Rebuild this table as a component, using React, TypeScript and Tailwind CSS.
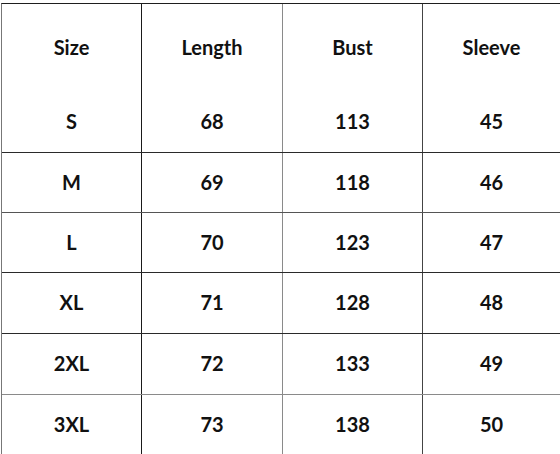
const rows = [
  { size: 'S', length: 68, bust: 113, sleeve: 45, h: 'h-[61px]', line: 'border-[#2a2a2a]' },
  { size: 'M', length: 69, bust: 118, sleeve: 46, h: 'h-[60px]', line: 'border-[#555]' },
  { size: 'L', length: 70, bust: 123, sleeve: 47, h: 'h-[60px]', line: 'border-[#2a2a2a]' },
  { size: 'XL', length: 71, bust: 128, sleeve: 48, h: 'h-[61px]', line: 'border-[#2a2a2a]' },
  { size: '2XL', length: 72, bust: 133, sleeve: 49, h: 'h-[61px]', line: 'border-[#8a8a8a]' },
  { size: '3XL', length: 73, bust: 138, sleeve: 50, h: 'h-[60px]', line: 'border-transparent' },
]

const cols = [
  'w-[140px] border-r border-[#1a1a1a]',
  'w-[141px] border-r border-[#8a8a8a]',
  'w-[140px] border-r border-[#444]',
  'flex-1',
]

function Cell({ className, children }: { className: string; children: React.ReactNode }) {
  return (
    <div className={`${className} flex items-center justify-center pb-[2px]`}>
      {children}
    </div>
  )
}

export default function App() {
  return (
    <div
      className="w-[560px] h-[454px] overflow-hidden bg-white pt-[3px] pl-px text-[20px] font-bold text-[#111]"
      style={{ fontFamily: 'Lato, "DejaVu Sans", sans-serif' }}
    >
      <div className="border-t border-l border-t-[#1e1e1e] border-l-[#777]">
        <div className="flex h-[88px]">
          {['Size', 'Length', 'Bust', 'Sleeve'].map((t, i) => (
            <Cell key={t} className={cols[i]}>
              {t}
            </Cell>
          ))}
        </div>
        {rows.map((r) => (
          <div key={r.size} className={`flex border-b ${r.h} ${r.line}`}>
            {[r.size, r.length, r.bust, r.sleeve].map((v, i) => (
              <Cell key={i} className={cols[i]}>
                {v}
              </Cell>
            ))}
          </div>
        ))}
      </div>
    </div>
  )
}
